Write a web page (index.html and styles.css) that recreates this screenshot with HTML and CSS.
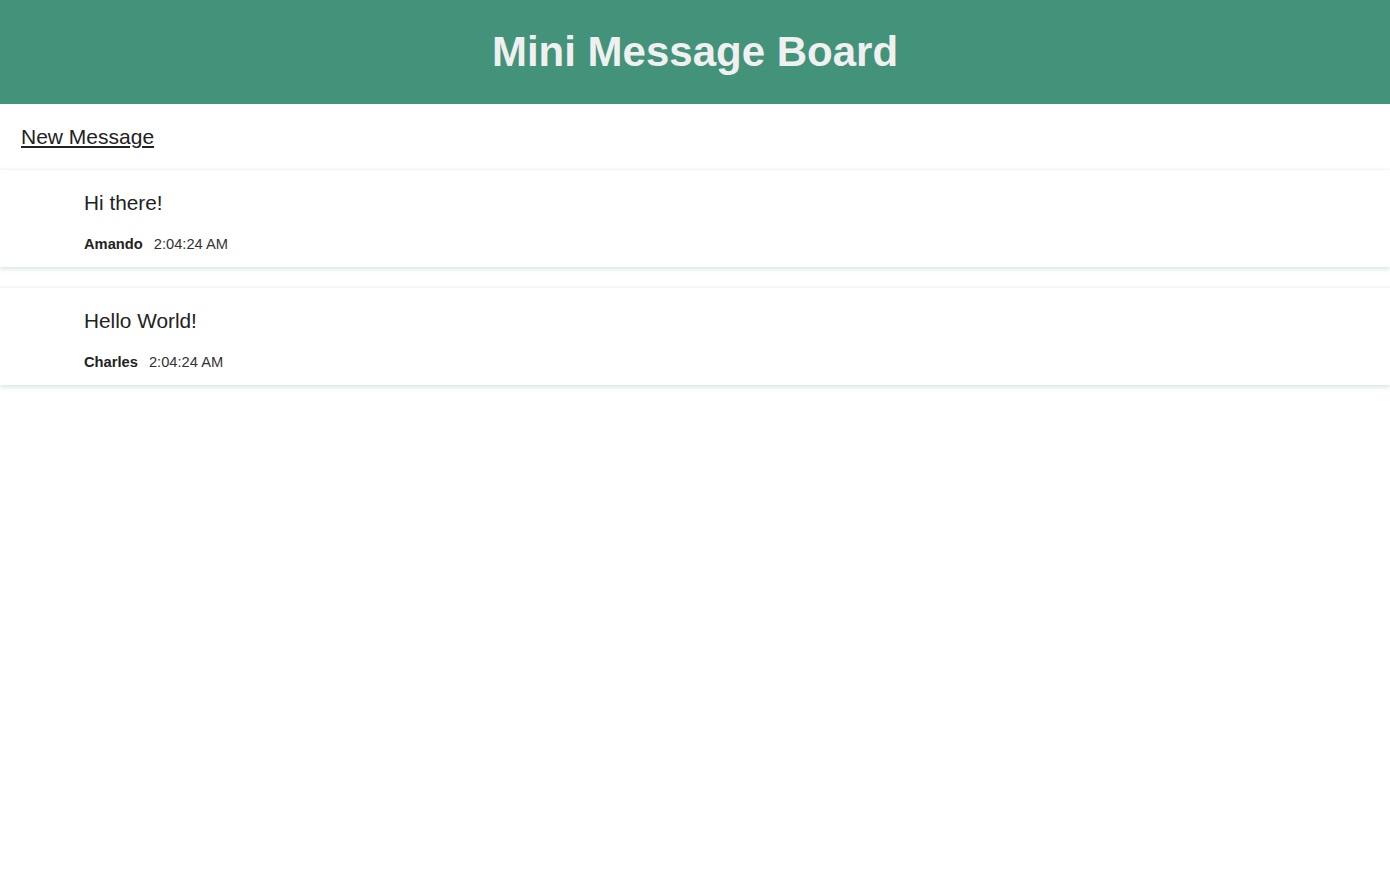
FILE: index.html
```html
<!DOCTYPE html>
<html lang="en">
<head>
<meta charset="utf-8">
<title>Mini Message Board</title>
<link rel="stylesheet" href="styles.css">
</head>
<body>
<header class="site-header">
  <h1 class="title">Mini Message Board</h1>
</header>
<nav class="nav">
  <a class="nav-link" href="#">New Message</a>
</nav>
<main class="messages">
  <article class="message">
    <p class="message-text">Hi there!</p>
    <div class="meta"><span class="author">Amando</span><span class="time">2:04:24 AM</span></div>
  </article>
  <article class="message">
    <p class="message-text">Hello World!</p>
    <div class="meta"><span class="author">Charles</span><span class="time">2:04:24 AM</span></div>
  </article>
</main>
</body>
</html>
```
FILE: styles.css
```css
* { box-sizing: border-box; }
body {
  margin: 0;
  font-family: "Liberation Sans", Arial, sans-serif;
  color: #222;
  background: #fff;
}
.site-header {
  background: #43937a;
  height: 104px;
  display: flex;
  align-items: center;
  justify-content: center;
}
.title {
  margin: 0;
  color: #f0f0f0;
  font-size: 42px;
  font-weight: bold;
}
.nav {
  height: 66px;
  padding: 0 21px;
  display: flex;
  align-items: center;
}
.nav-link {
  color: #222;
  font-size: 21px;
  text-decoration: underline;
}
.messages {
  display: flex;
  flex-direction: column;
  gap: 21px;
  padding-bottom: 20px;
}
.message {
  height: 97px;
  padding: 20px 84px 0;
  background: #fff;
  box-shadow: 0 2px 5px rgba(60, 120, 100, 0.2), 0 -1px 3px rgba(60, 120, 100, 0.05);
}
.message-text {
  margin: 0;
  font-size: 20.8px;
  line-height: 26px;
}
.meta {
  margin-top: 20px;
  font-size: 14.7px;
  display: flex;
  gap: 11px;
}
.author { font-weight: bold; }
.time { color: #333; }
```
